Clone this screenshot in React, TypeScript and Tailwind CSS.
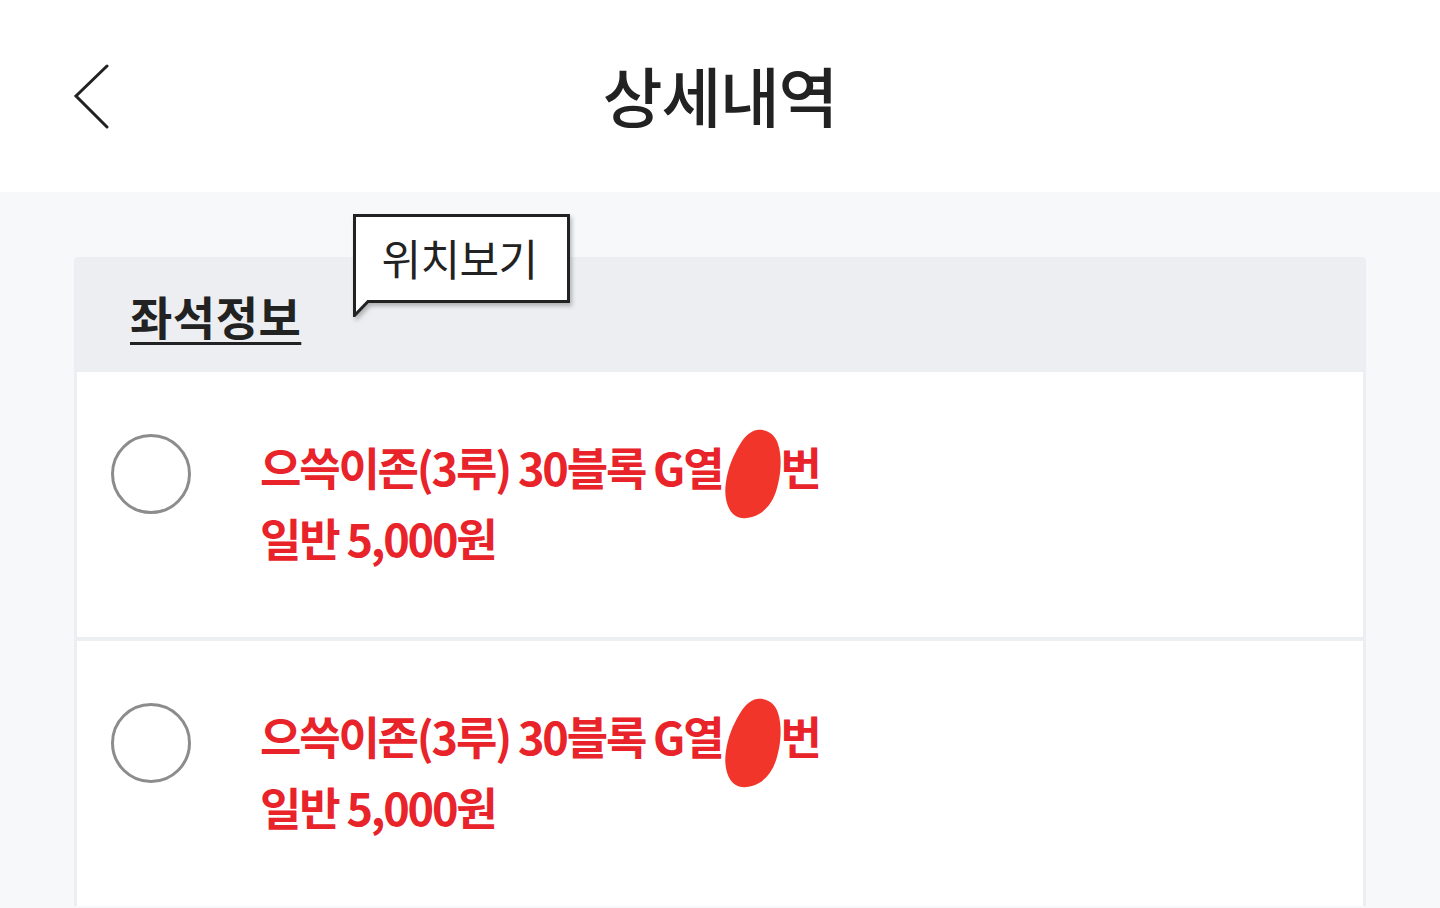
import React from "react";

const FONT = "font-['Noto_Sans_CJK_KR','Noto_Sans',sans-serif]";

function BackIcon() {
  return (
    <svg width="40" height="66" viewBox="0 0 40 66" fill="none">
      <path d="M35 2 L4 32 L35 63" stroke="#222" strokeWidth="3" strokeLinecap="round" strokeLinejoin="miter" />
    </svg>
  );
}

function Redact() {
  // hand-drawn red marker over the seat number
  return (
    <svg width="60" height="92" viewBox="0 0 60 92" className="inline-block align-middle -my-[30px] ml-[1px] -mr-[3px]">
      <path
        d="M34 2 C44 1 52 6 55 16 C59 28 58 44 55 56 C52 70 46 80 36 86 C28 91 16 92 10 86 C3 79 1 66 3 54 C5 40 10 28 16 18 C21 9 27 3 34 2 Z"
        fill="#f2352a"
      />
    </svg>
  );
}

function SeatRow() {
  return (
    <div className="flex items-start bg-white h-[265px] pl-[34px] pt-[62px]">
      <div className="w-[80px] h-[80px] rounded-full border-[3px] border-[#8c8c8c] shrink-0" />
      <div className="ml-[69px] -mt-[3px] text-[#e8232a] font-bold text-[45px] leading-[71px] tracking-[-2.2px]">
        <div className="whitespace-nowrap">
          으쓱이존(3루) 30블록 G열<Redact />번
        </div>
        <div>일반 5,000원</div>
      </div>
    </div>
  );
}

export default function App() {
  return (
    <div className={`w-full h-[908px] overflow-hidden bg-[#f6f8fa] ${FONT}`}>
      {/* Header */}
      <header className="grid grid-cols-[1fr_auto_1fr] items-center h-[192px] bg-white px-[72px]">
        <div className="flex items-center mt-[1px]">
          <BackIcon />
        </div>
        <h1 className="text-[65px] font-medium text-[#222] tracking-[-1.2px] -mt-[2px]">상세내역</h1>
        <div />
      </header>

      {/* Seat card */}
      <main className="px-[74px] pt-[65px]">
        <div className="bg-[#eceef1] rounded-t-[4px] px-[3px] flex flex-col gap-[4px]">
          <div className="relative h-[111px] flex items-center pl-[53px]">
            <span className="text-[46px] font-bold text-[#222] underline underline-offset-[7px] decoration-[3px] tracking-[0.5px] mt-[6px]">
              좌석정보
            </span>
            {/* tooltip bubble */}
            <div className="absolute left-[276px] -top-[43px] w-[217px] h-[103px]">
              <svg width="217" height="103" viewBox="0 0 217 103" className="absolute inset-0 drop-shadow-[2px_3px_2px_rgba(0,0,0,0.25)]">
                <path d="M1.5 1.5 H215.5 V87.5 H15 L1.5 101.5 Z" fill="#fff" stroke="#222" strokeWidth="3" strokeLinejoin="miter" />
              </svg>
              <div className="relative h-[88px] flex items-center justify-center text-[43px] text-[#222] tracking-[-0.5px] -mt-[1px] pr-[4px]">
                위치보기
              </div>
            </div>
          </div>
          <SeatRow />
          <SeatRow />
        </div>
      </main>
    </div>
  );
}
